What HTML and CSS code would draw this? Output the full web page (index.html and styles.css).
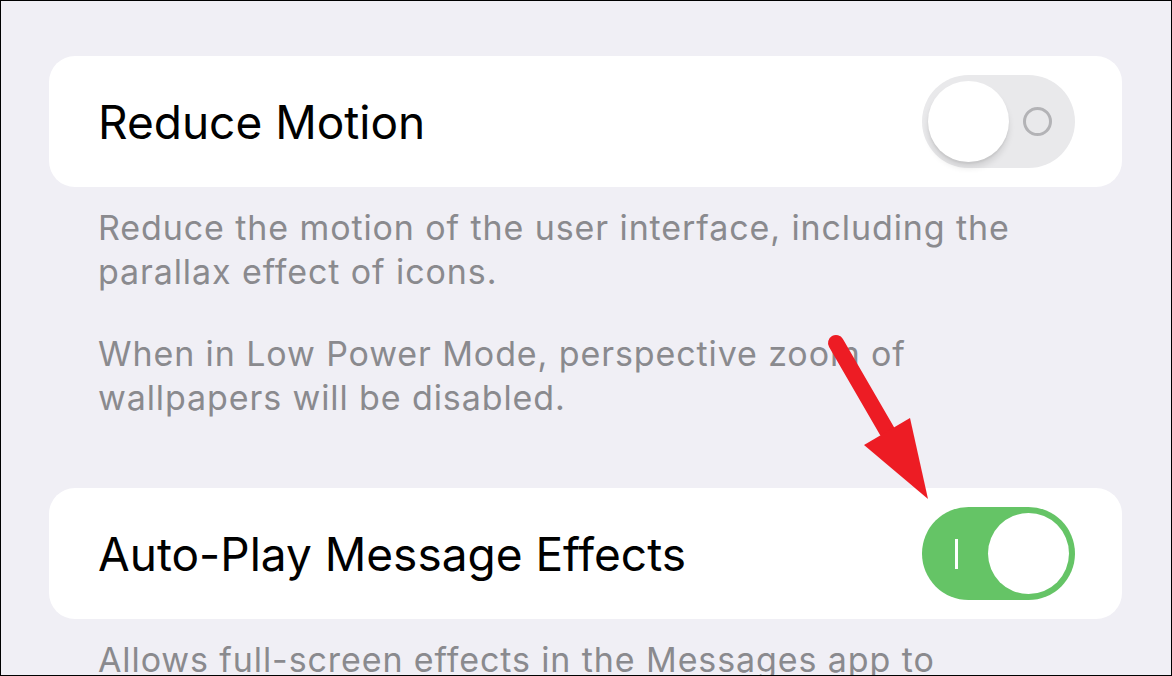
FILE: index.html
```html
<!DOCTYPE html>
<html>
<head>
<meta charset="utf-8">
<link rel="stylesheet" href="styles.css">
</head>
<body>
<div class="frame">
  <div class="card">
    <span class="label">Reduce Motion</span>
    <div class="toggle off">
      <span class="ring"></span>
      <span class="knob"></span>
    </div>
  </div>
  <div class="footer">
    <p>Reduce the motion of the user interface, including the<br>parallax effect of icons.</p>
    <p>When in Low Power Mode, perspective zoom of<br>wallpapers will be disabled.</p>
  </div>
  <div class="card card-second">
    <span class="label">Auto-Play Message Effects</span>
    <div class="toggle on">
      <span class="bar"></span>
      <span class="knob"></span>
    </div>
  </div>
  <div class="footer">
    <p>Allows full-screen effects in the Messages app to</p>
  </div>
  <svg class="arrow" width="1172" height="676" viewBox="0 0 1172 676">
    <line x1="836" y1="343" x2="887" y2="431" stroke="#ed1c24" stroke-width="16" stroke-linecap="round"/>
    <polygon points="864,445 910,418 928,499" fill="#ed1c24"/>
  </svg>
</div>
</body>
</html>
```
FILE: styles.css
```css
* { box-sizing: border-box; }
html, body { margin: 0; padding: 0; }
body { background: #f0eff5; font-family: Inter, "Noto Sans", sans-serif; }
.frame {
  position: relative;
  width: 1172px;
  height: 676px;
  border: 1px solid #000;
  overflow: hidden;
  background: #f0eff5;
  padding: 55px 49px 0 48px;
}
.card {
  height: 131px;
  background: #fff;
  border-radius: 26px;
  display: flex;
  align-items: center;
  justify-content: space-between;
  padding: 0 47px 0 49px;
}
.card-second { margin-top: 68px; }
.label {
  font-size: 46px;
  color: #000;
  letter-spacing: 0;
}
.footer {
  margin-top: 19px;
  padding-left: 49px;
  color: #8a8a8e;
  font-size: 34px;
  line-height: 44px;
  letter-spacing: 0.9px;
  white-space: nowrap;
}
.footer p { margin: 0 0 38px 0; }
.toggle {
  position: relative;
  width: 153px;
  height: 93px;
  border-radius: 47px;
  flex: none;
}
.toggle.off { background: #e9e9eb; }
.toggle.on { background: #65c466; }
.knob {
  position: absolute;
  top: 6px;
  width: 81px;
  height: 81px;
  border-radius: 50%;
  background: #fff;
}
.off .knob {
  left: 6px;
  box-shadow: 0 6px 6px rgba(0,0,0,0.10), 0 2px 2px rgba(0,0,0,0.06);
}
.on .knob { right: 6px; }
.ring {
  position: absolute;
  left: 101px;
  top: 32px;
  width: 29px;
  height: 29px;
  border-radius: 50%;
  border: 3px solid #b3b3b6;
}
.bar {
  position: absolute;
  left: 33px;
  top: 32px;
  width: 3px;
  height: 30px;
  background: #fff;
}
.arrow {
  position: absolute;
  left: -1px;
  top: -1px;
}
```
